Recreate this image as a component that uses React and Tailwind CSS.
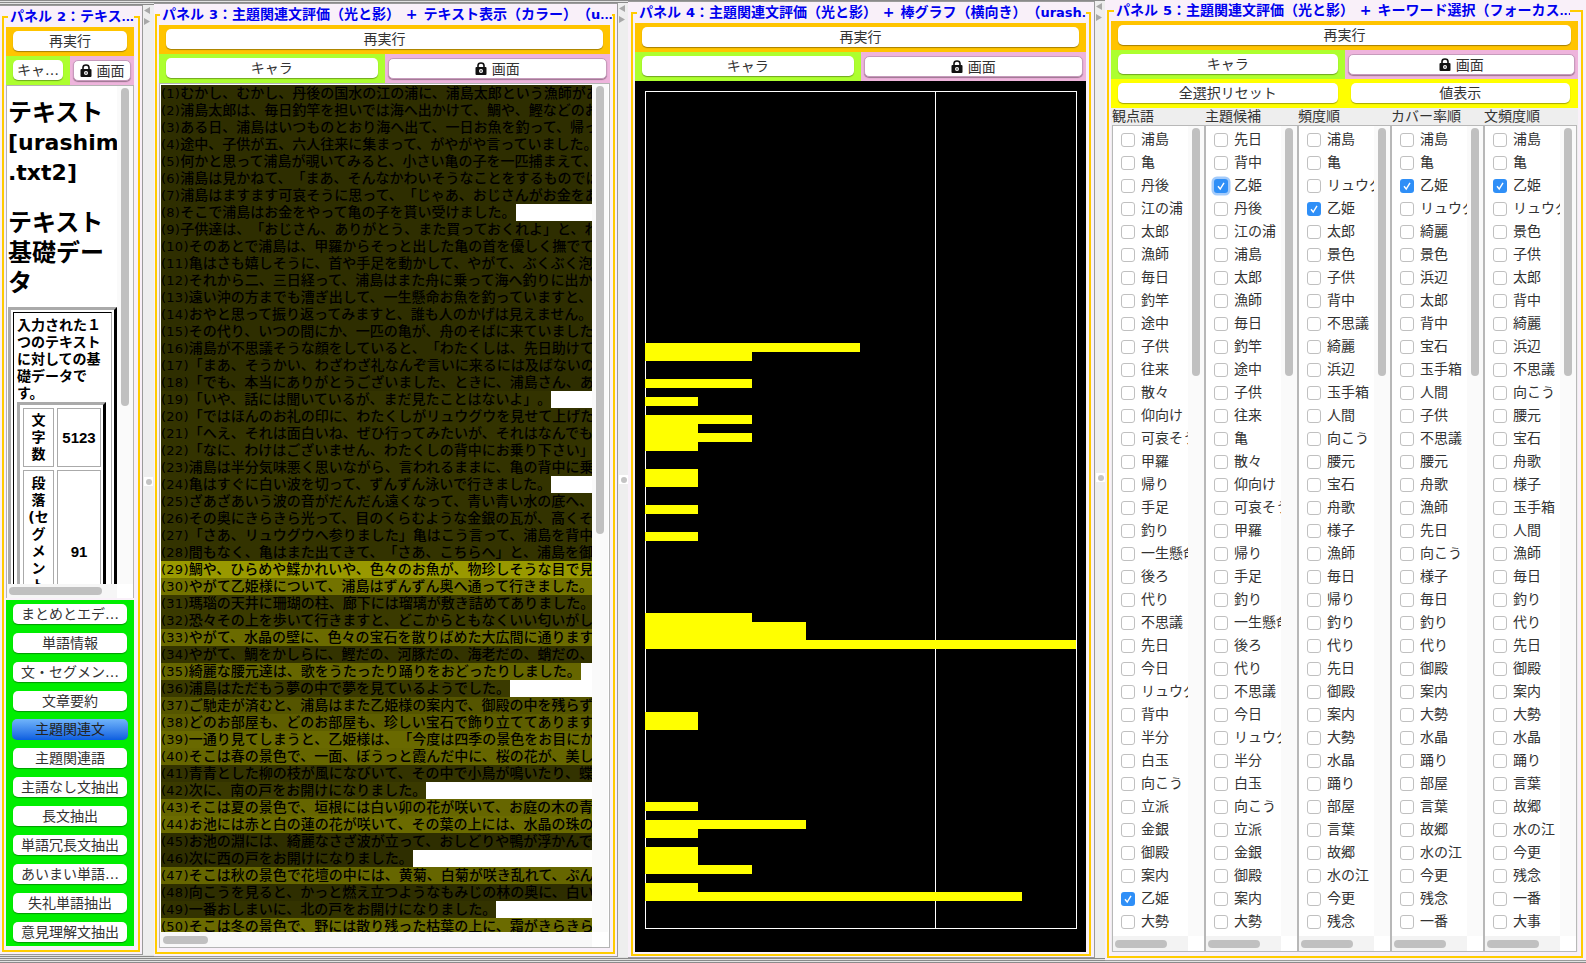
const FONT = "font-['DejaVu_Sans','Noto_Sans_CJK_JP',sans-serif]";

const SENTENCES = [
  ["1", "むかし、むかし、丹後の国水の江の浦に、浦島太郎という漁師がありました。", "bg-[#2e2e00]"],
  ["2", "浦島太郎は、毎日釣竿を担いでは海へ出かけて、鯛や、鰹などのお魚を釣って暮らしていました。", "bg-[#2e2e00]"],
  ["3", "ある日、浦島はいつものとおり海へ出て、一日お魚を釣って、帰ってきました。", "bg-[#2e2e00]"],
  ["4", "途中、子供が五、六人往来に集まって、がやがや言っていました。何だろうと思いました。", "bg-[#2e2e00]"],
  ["5", "何かと思って浦島が覗いてみると、小さい亀の子を一匹捕まえて、いじめていました。", "bg-[#2e2e00]"],
  ["6", "浦島は見かねて、「まあ、そんなかわいそうなことをするものではない」と言いました。", "bg-[#2e2e00]"],
  ["7", "浦島はますます可哀そうに思って、「じゃあ、おじさんがお金をあげよう」と言いました。", "bg-[#2e2e00]"],
  ["8", "そこで浦島はお金をやって亀の子を貰い受けました。", "bg-[#2e2e00]"],
  ["9", "子供達は、「おじさん、ありがとう、また買っておくれよ」と、わいわい言いました。", "bg-[#2e2e00]"],
  ["10", "そのあとで浦島は、甲羅からそっと出した亀の首を優しく撫でてやりました。", "bg-[#2e2e00]"],
  ["11", "亀はさも嬉しそうに、首や手足を動かして、やがて、ぶくぶく泡を立てて沈みました。", "bg-[#2e2e00]"],
  ["12", "それから二、三日経って、浦島はまた舟に乗って海へ釣りに出かけました。", "bg-[#2e2e00]"],
  ["13", "遠い沖の方までも漕ぎ出して、一生懸命お魚を釣っていますと、呼ぶ声がしました。", "bg-[#2e2e00]"],
  ["14", "おやと思って振り返ってみますと、誰も人のかげは見えません。その時です。", "bg-[#2e2e00]"],
  ["15", "その代り、いつの間にか、一匹の亀が、舟のそばに来ていました。", "bg-[#2e2e00]"],
  ["16", "浦島が不思議そうな顔をしていると、「わたくしは、先日助けていただいた亀です」", "bg-[#2e2e00]"],
  ["17", "「まあ、そうかい、わざわざ礼なんぞ言いに来るには及ばないのに」と言いました。", "bg-[#2e2e00]"],
  ["18", "「でも、本当にありがとうございました、ときに、浦島さん、あなたはリュウグウを", "bg-[#2e2e00]"],
  ["19", "「いや、話には聞いているが、まだ見たことはないよ」。", "bg-[#333300]"],
  ["20", "「ではほんのお礼の印に、わたくしがリュウグウを見せて上げたいと思います」", "bg-[#333300]"],
  ["21", "「へえ、それは面白いね、ぜひ行ってみたいが、それはなんでも海の底だろう」", "bg-[#333300]"],
  ["22", "「なに、わけはございません、わたくしの背中にお乗り下さい」亀は言いました。", "bg-[#333300]"],
  ["23", "浦島は半分気味悪く思いながら、言われるままに、亀の背中に乗りました。", "bg-[#333300]"],
  ["24", "亀はすぐに白い波を切って、ずんずん泳いで行きました。", "bg-[#333300]"],
  ["25", "ざあざあいう波の音がだんだん遠くなって、青い青い水の底へ、入って行きました。", "bg-[#333300]"],
  ["26", "その奥にきらきら光って、目のくらむような金銀の瓦が、高くそびえていました。", "bg-[#333300]"],
  ["27", "「さあ、リュウグウへ参りました」亀はこう言って、浦島を背中から下ろしました。", "bg-[#333300]"],
  ["28", "間もなく、亀はまた出てきて、「さあ、こちらへ」と、浦島を御殿の中へ案内しました。", "bg-[#333300]"],
  ["29", "鯛や、ひらめや鰈かれいや、色々のお魚が、物珍しそうな目で見ていました。", "bg-[#999900]"],
  ["30", "やがて乙姫様について、浦島はずんずん奥へ通って行きました。", "bg-[#737300]"],
  ["31", "瑪瑙の天井に珊瑚の柱、廊下には瑠璃が敷き詰めてありました。", "bg-[#3a3a00]"],
  ["32", "恐々その上を歩いて行きますと、どこからともなくいい匂いがしてきました。", "bg-[#3a3a00]"],
  ["33", "やがて、水晶の壁に、色々の宝石を散りばめた大広間に通りますと、", "bg-[#6b6b00]"],
  ["34", "やがて、鯛をかしらに、鰹だの、河豚だの、海老だの、蛸だの、集まってきました。", "bg-[#333300]"],
  ["35", "綺麗な腰元達は、歌をうたったり踊りをおどったりしました。", "bg-[#666600]"],
  ["36", "浦島はただもう夢の中で夢を見ているようでした。", "bg-[#3a3a00]"],
  ["37", "ご馳走が済むと、浦島はまた乙姫様の案内で、御殿の中を残らず見て回りました。", "bg-[#555500]"],
  ["38", "どのお部屋も、どのお部屋も、珍しい宝石で飾り立ててあります。", "bg-[#5e5e00]"],
  ["39", "一通り見てしまうと、乙姫様は、「今度は四季の景色をお目にかけましょう」", "bg-[#696900]"],
  ["40", "そこは春の景色で、一面、ぼうっと霞んだ中に、桜の花が、美しく咲いていました。", "bg-[#666600]"],
  ["41", "青青とした柳の枝が風になびいて、その中で小鳥が鳴いたり、蝶が舞ったりしました。", "bg-[#333300]"],
  ["42", "次に、南の戸をお開けになりました。", "bg-[#3a3a00]"],
  ["43", "そこは夏の景色で、垣根には白い卯の花が咲いて、お庭の木の青葉が茂っていました。", "bg-[#666600]"],
  ["44", "お池には赤と白の蓮の花が咲いて、その葉の上には、水晶の珠の露がありました。", "bg-[#6b6b00]"],
  ["45", "お池の淵には、綺麗なさざ波が立って、おしどりや鴨が浮かんでいました。", "bg-[#2e2e00]"],
  ["46", "次に西の戸をお開けになりました。", "bg-[#2e2e00]"],
  ["47", "そこは秋の景色で花壇の中には、黄菊、白菊が咲き乱れて、ぷんといい香りがしました。", "bg-[#666600]"],
  ["48", "向こうを見ると、かっと燃え立つようなもみじの林の奥に、白い霧が立っていました。", "bg-[#2e2e00]"],
  ["49", "一番おしまいに、北の戸をお開けになりました。", "bg-[#333300]"],
  ["50", "そこは冬の景色で、野には散り残った枯葉の上に、霜がきらきら光っていました。", "bg-[#6b6b00]"],
];

const BARS = [
  [28, 4], [29, 2], [32, 2], [34, 1], [36, 2], [37, 1], [38, 2], [39, 1], [42, 1], [43, 1], [46, 1], [49, 1],
  [58, 2], [59, 3], [60, 3], [61, 8], [69, 1], [70, 1], [79, 1], [81, 3], [82, 1], [84, 1], [85, 1], [86, 2],
  [88, 1], [89, 7],
];

const COLUMNS = [
  { title: "観点語", checked: 33, words: "浦島 亀 丹後 江の浦 太郎 漁師 毎日 釣竿 途中 子供 往来 散々 仰向け 可哀そう 甲羅 帰り 手足 釣り 一生懸命 後ろ 代り 不思議 先日 今日 リュウグウ 背中 半分 白玉 向こう 立派 金銀 御殿 案内 乙姫 大勢" },
  { title: "主題候補", checked: 2, focus: true, words: "先日 背中 乙姫 丹後 江の浦 浦島 太郎 漁師 毎日 釣竿 途中 子供 往来 亀 散々 仰向け 可哀そう 甲羅 帰り 手足 釣り 一生懸命 後ろ 代り 不思議 今日 リュウグウ 半分 白玉 向こう 立派 金銀 御殿 案内 大勢" },
  { title: "頻度順", checked: 3, words: "浦島 亀 リュウグウ 乙姫 太郎 景色 子供 背中 不思議 綺麗 浜辺 玉手箱 人間 向こう 腰元 宝石 舟歌 様子 漁師 毎日 帰り 釣り 代り 先日 御殿 案内 大勢 水晶 踊り 部屋 言葉 故郷 水の江 今更 残念" },
  { title: "カバー率順", checked: 2, words: "浦島 亀 乙姫 リュウグウ 綺麗 景色 浜辺 太郎 背中 宝石 玉手箱 人間 子供 不思議 腰元 舟歌 漁師 先日 向こう 様子 毎日 釣り 代り 御殿 案内 大勢 水晶 踊り 部屋 言葉 故郷 水の江 今更 残念 一番" },
  { title: "文頻度順", checked: 2, words: "浦島 亀 乙姫 リュウグウ 景色 子供 太郎 背中 綺麗 浜辺 不思議 向こう 腰元 宝石 舟歌 様子 玉手箱 人間 漁師 毎日 釣り 代り 先日 御殿 案内 大勢 水晶 踊り 言葉 故郷 水の江 今更 残念 一番 大事" },
];

const SIDE_BUTTONS = ["まとめとエデ…", "単語情報", "文・セグメン…", "文章要約", "主題関連文", "主題関連語", "主語なし文抽出", "長文抽出", "単語冗長文抽出", "あいまい単語…", "失礼単語抽出", "意見理解文抽出"];

function Btn({ children, className = "" }) {
  return (
    <div className={"flex h-[20px] items-center justify-center gap-[5px] overflow-hidden whitespace-nowrap rounded-[5px] bg-white text-[14px] leading-[20px] text-[#333] shadow-[0_1px_1px_rgba(0,0,0,0.35)] " + className}>
      {children}
    </div>
  );
}

function Lock() {
  return (
    <svg width="12" height="13" viewBox="0 0 12 13" className="shrink-0">
      <path d="M3 6V3.6C3 2 4.3 1 6 1s3 1 3 2.6V6" fill="none" stroke="#111" strokeWidth="1.6" />
      <rect x="0.5" y="5" width="11" height="8" rx="1" fill="#111" />
      <circle cx="6" cy="9" r="2" fill="#fff" />
      <circle cx="6" cy="9" r="0.8" fill="#111" />
    </svg>
  );
}

function RunBar() {
  return (
    <div className="h-[29px] shrink-0 bg-[#ffc400] px-[7px] pt-[4px]">
      <Btn>再実行</Btn>
    </div>
  );
}

function ModeBar({ chara = "キャラ" }) {
  return (
    <div className="grid h-[29px] shrink-0 grid-cols-2">
      <div className="bg-[#adff2f] px-[7px] pt-[4px]">
        <Btn>{chara}</Btn>
      </div>
      <div className="bg-[#eeb4dc] px-[3px] pt-[4px]">
        <Btn className="h-[21px] border border-[#c79abc]">
          <Lock />
          <span>画面</span>
        </Btn>
      </div>
    </div>
  );
}

function Splitter({ top, height, width }) {
  return (
    <div className={"flex shrink-0 flex-col items-start bg-[#eeeeee] pl-[1px] " + top + " " + height + " " + width}>
      <svg width="7" height="20" viewBox="0 0 7 20" className="mt-[2px]">
        <polygon points="6,0 6,7 0,3.5" fill="#a8a8a8" />
        <polygon points="0,11 0,18 6,14.5" fill="#a8a8a8" />
      </svg>
      <div className="mt-[450px] flex h-[9px] w-[9px] items-center justify-center bg-white">
        <div className="h-[6px] w-[6px] rounded-full bg-[#c4c4c4]" />
      </div>
    </div>
  );
}

function Panel({ n, title, outer, field, legend, children }) {
  return (
    <div className={"shrink-0 border-r border-b border-[#9a9a9a] bg-[#f9f0f9] " + outer}>
      <fieldset className={"flex min-w-0 flex-col border-2 border-[#ffcc00] " + field}>
        <legend className={"h-[17px] overflow-hidden whitespace-nowrap px-[2px] text-[14px] leading-[17px] font-bold text-[#0000ee] " + legend}>
          パネル <span className="text-[13px]">{n}</span>：{title}<span className="text-[11px]">...</span>
        </legend>
        {children}
      </fieldset>
    </div>
  );
}

function Plus() {
  return <span className="mx-[1px]"> + </span>;
}

function TextPanel() {
  return (
    <div className="flex min-h-0 flex-1 flex-col">
      <div className="grid h-[513px] shrink-0 grid-cols-[110px_16px] grid-rows-[498px_14px] border border-[#b4b4b4] bg-white">
        <div className="overflow-hidden pl-[1px] text-black">
          <h2 className="mt-[12px] whitespace-nowrap text-[24px] leading-[30px] font-bold">
            <div>テキスト</div>
            <div className="text-[22px]">[urashim</div>
            <div className="text-[22px]">.txt2]</div>
          </h2>
          <h2 className="mt-[20px] text-[24px] leading-[30px] font-bold">テキスト<br />基礎デー<br />タ</h2>
          <div className="mt-[9px] w-[109px] border-[3px] border-[#aaaaaa] border-r-black border-b-black p-[2px]">
            <div className="border border-[#aaaaaa] border-t-black border-l-black px-[3px] pt-[4px] text-[14px] leading-[17px] font-bold">
              入力された１つのテキストに対しての基礎データです。
              <div className="w-[89px] border-[3px] border-[#aaaaaa] border-r-black border-b-black p-[3px]">
                <div className="grid grid-cols-[31px_44px] gap-[3px] text-center">
                  <div className="flex h-[59px] items-center justify-center border border-[#aaaaaa]">文<br />字<br />数</div>
                  <div className="flex h-[59px] items-center justify-center border border-[#aaaaaa] font-['Liberation_Sans'] text-[15px]">5123</div>
                  <div className="flex h-[162px] items-center justify-center border border-[#aaaaaa] px-[5px]">段<br />落<br />(セ<br />グ<br />メ<br />ン<br />ト<br />)<br />数</div>
                  <div className="flex h-[162px] items-center justify-center border border-[#aaaaaa] font-['Liberation_Sans'] text-[15px]">91</div>
                </div>
              </div>
            </div>
          </div>
        </div>
        <div className="bg-[#fafafa] px-[4px] pt-[2px]">
          <div className="h-[318px] rounded-full bg-[#c0c0c0]" />
        </div>
        <div className="bg-[#f6f6f6] px-[2px] pt-[3px]">
          <div className="h-[8px] w-[93px] rounded-full bg-[#c0c0c0]" />
        </div>
        <div className="bg-white" />
      </div>
      <div className="mt-[2px] flex flex-1 flex-col gap-[9px] bg-[#00ee00] px-[7px] pt-[4px]">
        {SIDE_BUTTONS.map((b) =>
          b === "主題関連文" ? (
            <div key={b} className="-mx-[1px] -my-[1px] flex h-[21px] shrink-0 items-center justify-center rounded-[5px] bg-gradient-to-b from-[#70b4fa] to-[#0a5ee0] text-[14px] text-[#222]">{b}</div>
          ) : (
            <Btn key={b} className="shrink-0">{b}</Btn>
          )
        )}
      </div>
    </div>
  );
}

function Sentences() {
  return (
    <div className="grid min-h-0 flex-1 grid-cols-[432px_16px] grid-rows-[1fr_15px] border border-[#b4b4b4] bg-white">
      <div className="overflow-hidden pt-[1px] pl-[1px] text-[14px] leading-[17px] font-medium text-black">
        {SENTENCES.map(([n, text, bg]) => (
          <div key={n} className={"h-[17px] w-fit whitespace-nowrap " + bg}>
            <span className="text-[13px] font-normal tracking-[0.25px]">({n})</span>{text}
          </div>
        ))}
      </div>
      <div className="bg-[#fafafa] pt-[2px] pl-[4px]">
        <div className="h-[448px] w-[8px] rounded-full bg-[#c0c0c0]" />
      </div>
      <div className="bg-[#f8f8f8] pt-[4px] pl-[3px]">
        <div className="h-[8px] w-[45px] rounded-full bg-[#c0c0c0]" />
      </div>
      <div className="bg-white" />
    </div>
  );
}

function Chart() {
  const unit = 53.875;
  return (
    <div className="min-h-0 flex-1 bg-black pt-[10px] pl-[10px]">
      <svg width="432" height="838" viewBox="0 0 432 838">
        <rect x="0.5" y="0.5" width="431" height="837" fill="none" stroke="#ffffff" strokeWidth="1" />
        <line x1="290.5" y1="0" x2="290.5" y2="838" stroke="#ffffff" strokeWidth="1" />
        {BARS.map(([i, v]) => (
          <rect key={i} x="0" y={i * 9} width={Math.floor(v * unit)} height="9" fill="#ffff00" />
        ))}
      </svg>
    </div>
  );
}

function Check({ checked, focus }) {
  return (
    <span className={"flex h-[14px] w-[14px] shrink-0 items-center justify-center rounded-[3px] " + (checked ? "bg-[#2f8ff7]" : "border border-[#c0c0c0] bg-white") + (focus ? " shadow-[0_0_0_2.5px_rgba(90,160,245,0.55)]" : "")}>
      {checked && (
        <svg width="10" height="10" viewBox="0 0 10 10">
          <path d="M2 5.2 4.2 8 8 1.8" fill="none" stroke="#fff" strokeWidth="1.4" />
        </svg>
      )}
    </span>
  );
}

function KeywordPanel() {
  return (
    <div className="flex min-h-0 flex-1 flex-col">
      <div className="grid h-[29px] shrink-0 grid-cols-2 bg-[#ffff00] pt-[4px]">
        <div className="px-[7px]"><Btn>全選択リセット</Btn></div>
        <div className="pr-[8px] pl-[6px]"><Btn>値表示</Btn></div>
      </div>
      <div className="flex min-h-0 flex-1 bg-[#eeeeee] pl-[1px]">
        {COLUMNS.map((c) => (
          <div key={c.title} className="flex w-[93px] shrink-0 flex-col">
            <div className="h-[17px] shrink-0 text-[14px] leading-[17px] text-[#333]">{c.title}</div>
            <div className="grid min-h-0 flex-1 grid-cols-[75px_1fr] grid-rows-[1fr_15px] border border-[#b8b8b8] bg-white">
              <div className="overflow-hidden pt-[2px]">
                {c.words.split(" ").map((w, i) => (
                  <div key={i} className="flex h-[23px] items-center gap-[6px] pl-[8px] whitespace-nowrap text-[14px] text-[#333]">
                    <Check checked={i === c.checked} focus={c.focus && i === c.checked} />
                    <span>{w}</span>
                  </div>
                ))}
              </div>
              <div className="bg-[#fafafa] pt-[2px] pl-[4px]">
                <div className="h-[248px] w-[8px] rounded-full bg-[#c0c0c0]" />
              </div>
              <div className="bg-[#f3f3f3] pt-[4px] pl-[2px]">
                <div className="h-[8px] w-[52px] rounded-full bg-[#c0c0c0]" />
              </div>
              <div className="bg-white" />
            </div>
          </div>
        ))}
      </div>
    </div>
  );
}

export default function App() {
  return (
    <div className={"flex h-[963px] w-[1586px] items-start overflow-hidden bg-[repeating-linear-gradient(to_bottom,#8a8a8a_0,#8a8a8a_1px,#e2e2e2_1px,#e2e2e2_2px)] [text-spacing-trim:space-all] " + FONT}>
      <Panel
        n="2"
        title="テキス"
        outer="mt-[5px] h-[950px] w-[143px] border-t pt-[2px] pl-[2px]"
        field="h-[944px] w-[138px] pr-[4px] pb-[2px] pl-[2px]"
        legend="ml-[2px] w-[126px]"
      >
        <div className="flex h-[921px] flex-col pt-[2px]">
          <RunBar />
          <ModeBar chara="キャ…" />
          <TextPanel />
        </div>
      </Panel>
      <Splitter top="mt-[5px]" height="h-[950px]" width="w-[11px]" />
      <Panel
        n="3"
        title={<>主題関連文評価（光と影）<Plus />テキスト表示（カラー）（<span className="text-[13px]">u</span></>}
        outer="mt-[3px] h-[954px] w-[464px] border-t pt-[2px] pl-[1px]"
        field="h-[948px] w-[460px] pr-[3px] pb-[4px] pl-[2px]"
        legend="ml-[1px] w-[452px]"
      >
        <div className="flex h-[925px] flex-col pt-[2px]">
          <RunBar />
          <ModeBar />
          <Sentences />
        </div>
      </Panel>
      <Splitter top="mt-[3px]" height="h-[954px]" width="w-[10px]" />
      <Panel
        n="4"
        title={<>主題関連文評価（光と影）<Plus />棒グラフ（横向き）（<span className="text-[13px]">urash</span></>}
        outer="mt-[1px] h-[957px] w-[467px] border-t pt-[2px] pl-[3px]"
        field="h-[952px] w-[460px] pr-[3px] pb-[2px] pl-[2px]"
        legend="ml-[2px] w-[449px]"
      >
        <div className="flex h-[931px] flex-col pt-[2px]">
          <RunBar />
          <ModeBar />
          <Chart />
        </div>
      </Panel>
      <Splitter top="mt-[1px]" height="h-[957px]" width="w-[10px]" />
      <Panel
        n="5"
        title={<>主題関連文評価（光と影）<Plus />キーワード選択（フォーカス</>}
        outer="h-[961px] w-[481px] border-r-0 pt-[2px] pl-[2px]"
        field="h-[956px] w-[476px] pr-[3px] pb-[4px] pl-[2px]"
        legend="ml-[3px] w-[456px]"
      >
        <div className="flex h-[933px] flex-col pt-[2px]">
          <RunBar />
          <ModeBar />
          <KeywordPanel />
        </div>
      </Panel>
    </div>
  );
}
